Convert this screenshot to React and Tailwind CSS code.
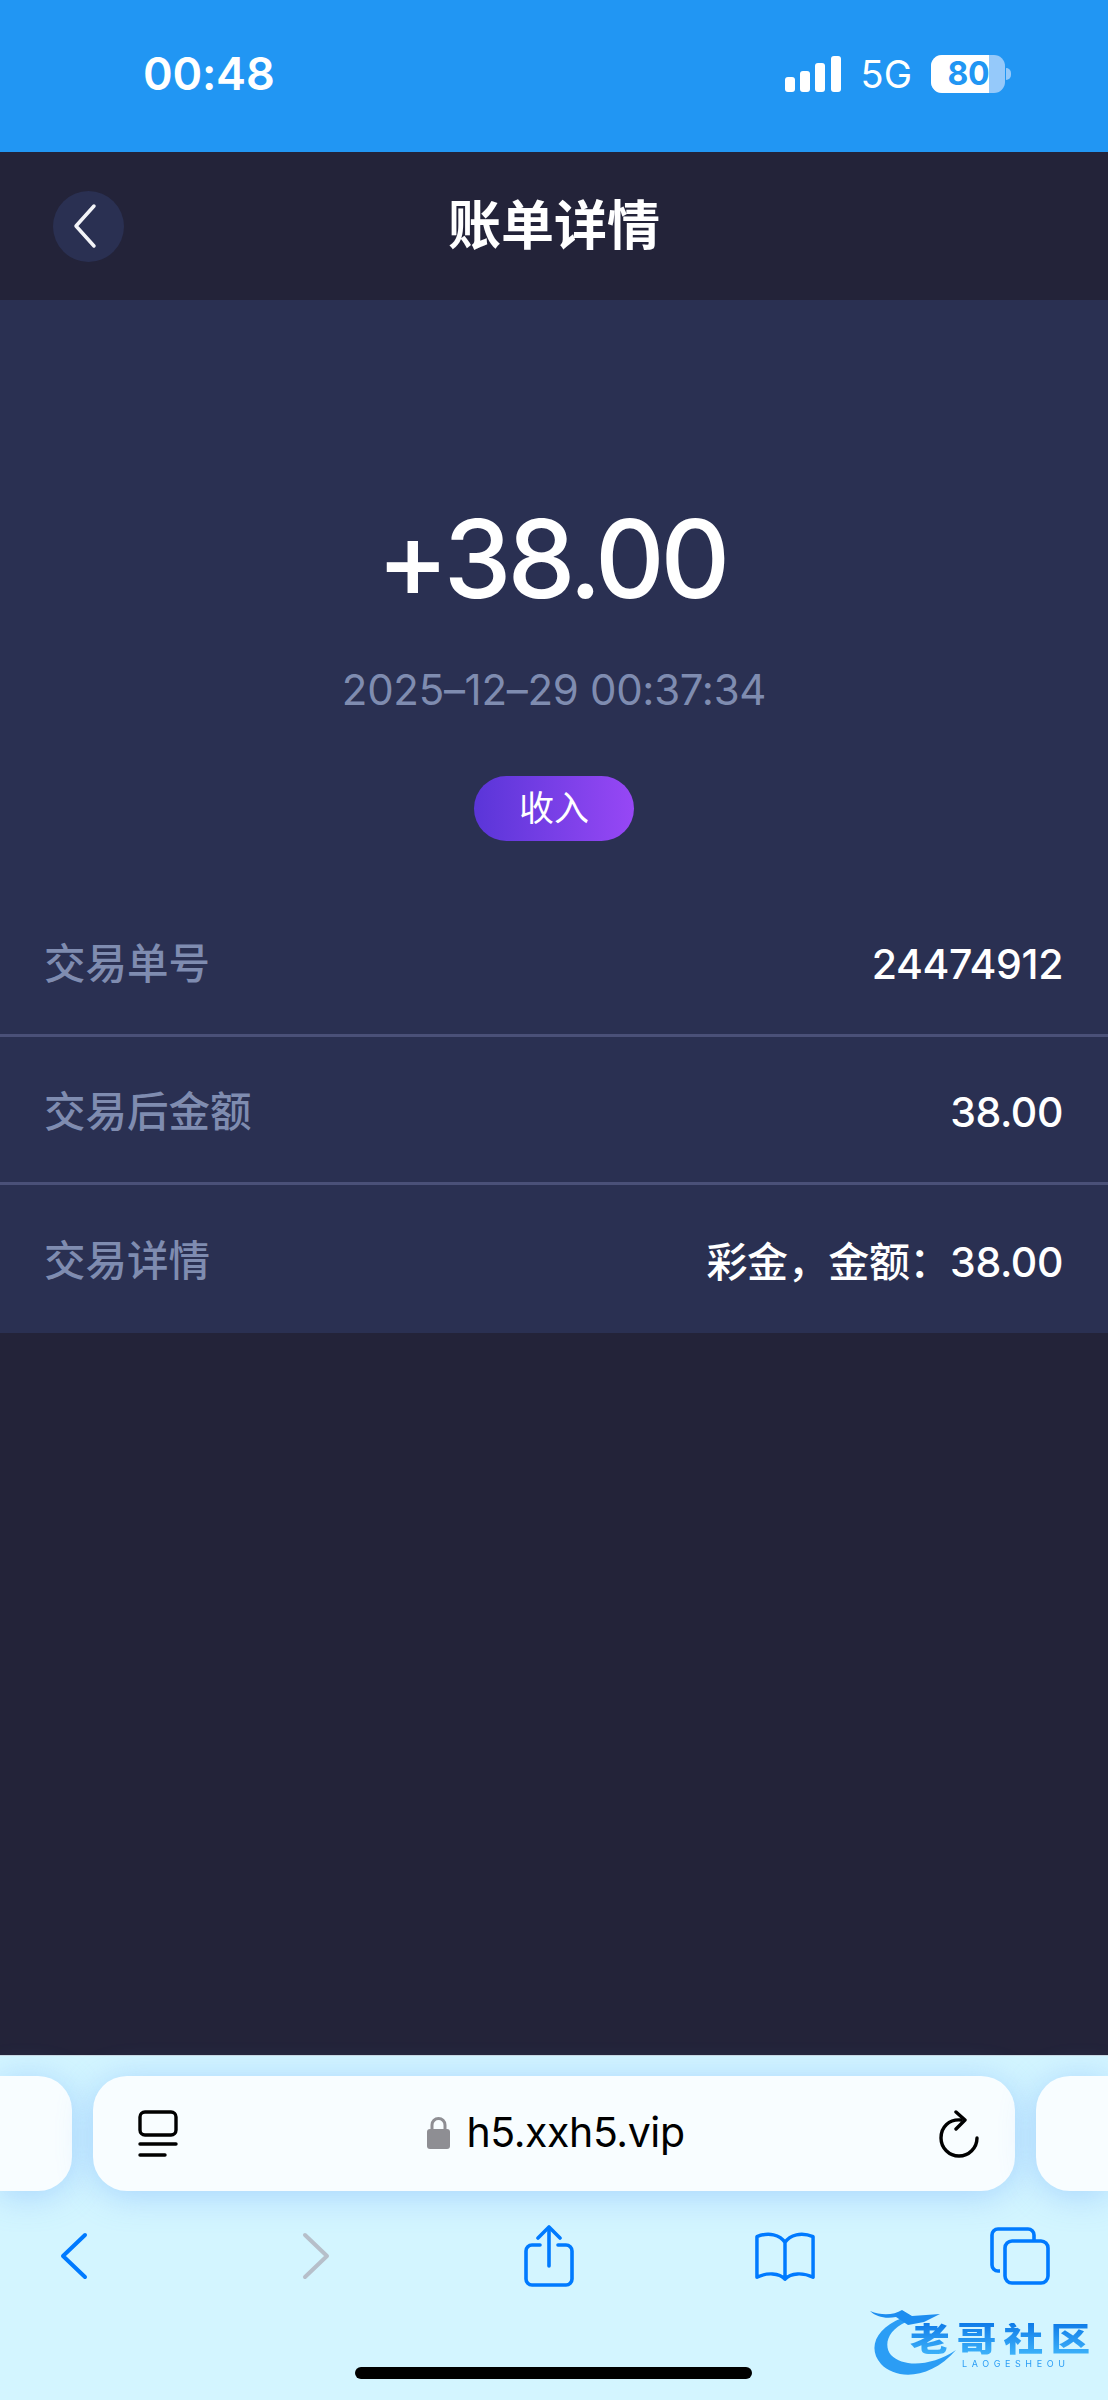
import { useState } from 'react'

const ROWS = [
  { label: '交易单号', value: '24474912' },
  { label: '交易后金额', value: '38.00' },
  { label: '交易详情', value: '彩金，金额：38.00' },
]

const FONT = "font-['Inter','Noto_Sans_CJK_SC',sans-serif]"

function StatusBar() {
  return (
    <div className="h-[152px] bg-[#2196f3] flex items-center pl-[143px] pr-[97px] pb-[5px] text-white">
      <span className="text-[45px] font-semibold tracking-[-0.2px] leading-none">00:48</span>
      <div className="ml-auto flex items-center">
        <svg width="56" height="36" viewBox="0 0 56 36" fill="#fff">
          <rect x="0" y="21" width="10" height="15" rx="3" />
          <rect x="15" y="15" width="10" height="21" rx="3" />
          <rect x="30" y="7" width="10" height="29" rx="3" />
          <rect x="46" y="0" width="10" height="36" rx="3" />
        </svg>
        <span className="ml-[20px] text-[38px] font-normal leading-none">5G</span>
        <div className="ml-[19px] flex items-center">
          <div className="w-[74px] h-[38px] rounded-[11px] overflow-hidden flex bg-[#95c9fa]">
            <div className="w-[58px] h-full bg-white flex items-center justify-end text-[#2196f3] text-[32px] font-bold leading-none tracking-[-0.5px]">
              80
            </div>
          </div>
          <div className="ml-[1px] w-[5px] h-[12px] rounded-r-full bg-[#95c9fa]" />
        </div>
      </div>
    </div>
  )
}

function NavBar() {
  return (
    <div className="h-[148px] bg-[#232339] flex items-center relative">
      <button className="ml-[53px] w-[71px] h-[71px] rounded-full bg-[#2a3052] flex items-center justify-center">
        <svg width="30" height="46" viewBox="0 0 30 46" fill="none" stroke="#f3f4f8" strokeWidth="3.5" strokeLinecap="round" strokeLinejoin="round" className="mr-[7px]">
          <path d="M24 3 L6 23 L24 43" />
        </svg>
      </button>
      <h1 className="absolute left-0 right-0 text-center text-[53px] font-semibold text-white leading-none">账单详情</h1>
    </div>
  )
}

function Summary() {
  return (
    <div className="bg-[#2a3052]">
      <div className="flex flex-col items-center pt-[200px]">
        <div className="pr-[5px] text-[108px] leading-[118px] font-medium tracking-[-4px] text-white">+38.00</div>
        <div className="mt-[47px] text-[42px] leading-[50px] tracking-[-0.3px] text-[#7f8cb0]">2025–12–29 00:37:34</div>
        <div className="mt-[61px] w-[160px] h-[65px] rounded-full bg-gradient-to-r from-[#5a35d8] to-[#9747f5] flex items-center justify-center text-white text-[35px] leading-none">
          收入
        </div>
      </div>
      <div className="mt-[48px]">
        {ROWS.map((r, i) => (
          <div
            key={r.label}
            className={`h-[148px] flex items-center justify-between pl-[44px] pr-[45px] pt-[6px] ${i < 2 ? 'border-b-[3px] border-[#4a5078]' : ''}`}
          >
            <span className="text-[41.5px] font-medium text-[#7f8cb0] leading-none">{r.label}</span>
            <span className="text-[41px] font-medium tracking-[-0.4px] text-white leading-none">{r.value}</span>
          </div>
        ))}
      </div>
    </div>
  )
}

function BrowserBar() {
  return (
    <div className="h-[345px] bg-[#d3f5ff] border-t border-[#c9d8e2] relative">
      <div className="pt-[20px] flex gap-[21px]">
        <div className="w-[72px] h-[115px] bg-[#f8fdff] rounded-r-[34px] shadow-[0_4px_34px_rgba(110,170,250,0.45)]" />
        <div className="w-[922px] h-[115px] bg-[#f8fdff] rounded-[34px] shadow-[0_4px_34px_rgba(110,170,250,0.45)] flex items-center pl-[45px] pr-[36px]">
          <svg width="40" height="48" viewBox="0 0 40 48" fill="none" stroke="#000" strokeWidth="3.4" strokeLinecap="round">
            <rect x="2" y="2" width="36" height="23" rx="5" />
            <path d="M2 34 H38" />
            <path d="M2 45 H27" />
          </svg>
          <div className="flex-1 flex items-center justify-center pb-[2px] pr-[5px]">
            <svg width="23" height="33" viewBox="0 0 23 33" className="mr-[16px]">
              <path d="M5 15 V9 a6.5 6.5 0 0 1 13 0 V15" fill="none" stroke="#8e8e93" strokeWidth="3" />
              <rect x="0" y="13" width="23" height="20" rx="3" fill="#8e8e93" />
            </svg>
            <span className="text-[41px] tracking-[-0.4px] leading-none text-black">h5.xxh5.vip</span>
          </div>
          <svg width="40" height="48" viewBox="0 0 40 48" fill="none" stroke="#000" strokeWidth="3.4" strokeLinecap="round" strokeLinejoin="round">
            <path d="M22 10 C10 9 2 17 2 28 a18 18 0 0 0 36 0" />
            <path d="M17 2 L26 10 L17 19" />
          </svg>
        </div>
        <div className="w-[72px] h-[115px] bg-[#f8fdff] rounded-l-[34px] shadow-[0_4px_34px_rgba(110,170,250,0.45)]" />
      </div>

      <div className="mt-[35px] pl-[44px] grid grid-cols-[242px_233px_236px_235px_60px]">
        <div className="w-[60px] h-[60px] flex items-center justify-center">
          <svg width="28" height="48" viewBox="0 0 28 48" fill="none" stroke="#007aff" strokeWidth="4" strokeLinecap="round" strokeLinejoin="round">
            <path d="M25 3 L3 24 L25 45" />
          </svg>
        </div>
        <div className="w-[60px] h-[60px] flex items-center justify-center">
          <svg width="28" height="48" viewBox="0 0 28 48" fill="none" stroke="#b6bfca" strokeWidth="4" strokeLinecap="round" strokeLinejoin="round">
            <path d="M3 3 L25 24 L3 45" />
          </svg>
        </div>
        <div className="w-[60px] h-[60px] flex items-center justify-center">
          <svg width="50" height="62" viewBox="0 0 50 62" fill="none" stroke="#007aff" strokeWidth="3.6" strokeLinecap="round" strokeLinejoin="round">
            <path d="M16 20 H8 a6 6 0 0 0 -6 6 V54 a6 6 0 0 0 6 6 H42 a6 6 0 0 0 6 -6 V26 a6 6 0 0 0 -6 -6 H34" />
            <path d="M25 41 V3" />
            <path d="M14 13 L25 2 L36 13" />
          </svg>
        </div>
        <div className="w-[60px] h-[60px] flex items-center justify-center">
          <svg width="62" height="52" viewBox="0 0 62 52" fill="none" stroke="#007aff" strokeWidth="3.6" strokeLinecap="round" strokeLinejoin="round">
            <path d="M31 12 C26 4 14 1 2 6 V48 C12 43 25 43 31 50 C37 43 50 43 60 48 V6 C48 1 36 4 31 12 V50" />
          </svg>
        </div>
        <div className="w-[60px] h-[60px] flex items-center justify-center">
          <svg width="60" height="58" viewBox="0 0 60 58" fill="none" stroke="#007aff" strokeWidth="3.6" strokeLinejoin="round">
            <path d="M10 44 H8 a6 6 0 0 1 -6 -6 V8 a6 6 0 0 1 6 -6 H38 a6 6 0 0 1 6 6 V14" />
            <rect x="15" y="14" width="43" height="42" rx="7" />
          </svg>
        </div>
      </div>

      <div className="mt-[81px] w-[397px] h-[12px] ml-[355px] rounded-full bg-black" />

      {/* watermark sits over the toolbar */}
      <div className="absolute left-[868px] top-[248px] w-[230px] h-[85px] blur-[0.7px]">
        <svg width="100" height="84" viewBox="0 0 100 84" className="absolute left-0 top-0" fill="none">
          <path d="M34 14 C8 24 -1 44 13 60 C28 76 62 76 88 46 C64 62 36 64 23 51 C15 41 20 26 38 18 Z" fill="#2b9df5" />
          <path d="M2 7 C14 12 26 11 34 6 L44 12 L72 10 L56 18 L40 21 L28 13 C18 15 8 13 2 7 Z" fill="#1d8df0" />
        </svg>
        <div className="absolute left-[42px] top-[19px] origin-left scale-x-[1.2] text-[33px] font-black leading-none tracking-[6px] whitespace-nowrap bg-gradient-to-b from-[#0f7be8] to-[#3fb4fa] bg-clip-text text-transparent">
          老哥社区
        </div>
        <div className="absolute left-[94px] top-[55px] text-[9px] leading-none tracking-[4.6px] whitespace-nowrap text-[#2b9df5]">
          LAOGESHEOU
        </div>
      </div>
    </div>
  )
}

export default function App() {
  const [page] = useState('bill')
  return (
    <div data-page={page} className={`w-[1108px] h-[2400px] flex flex-col bg-[#232339] overflow-hidden ${FONT}`}>
      <StatusBar />
      <NavBar />
      <Summary />
      <div className="flex-1" />
      <BrowserBar />
    </div>
  )
}
